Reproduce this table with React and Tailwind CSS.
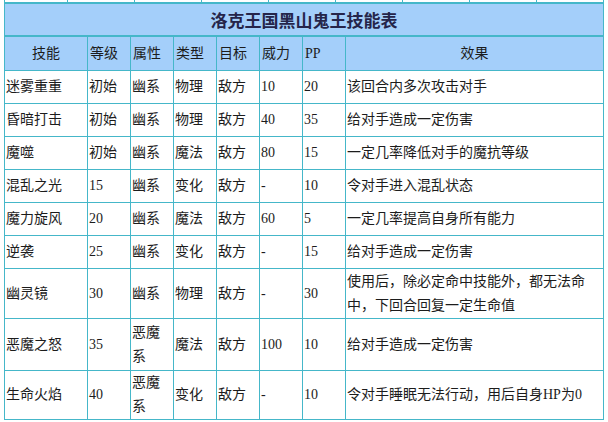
import React from "react";

const rows = [
  ["迷雾重重", "初始", "幽系", "物理", "敌方", "10", "20", "该回合内多次攻击对手"],
  ["昏暗打击", "初始", "幽系", "物理", "敌方", "40", "35", "给对手造成一定伤害"],
  ["魔噬", "初始", "幽系", "魔法", "敌方", "80", "15", "一定几率降低对手的魔抗等级"],
  ["混乱之光", "15", "幽系", "变化", "敌方", "-", "10", "令对手进入混乱状态"],
  ["魔力旋风", "20", "幽系", "魔法", "敌方", "60", "5", "一定几率提高自身所有能力"],
  ["逆袭", "25", "幽系", "变化", "敌方", "-", "15", "给对手造成一定伤害"],
  ["幽灵镜", "30", "幽系", "物理", "敌方", "-", "30", ["使用后，除必定命中技能外，都无法命", "中，下回合回复一定生命值"]],
  ["恶魔之怒", "35", ["恶魔", "系"], "魔法", "敌方", "100", "10", "给对手造成一定伤害"],
  ["生命火焰", "40", ["恶魔", "系"], "变化", "敌方", "-", "10", "令对手睡眠无法行动，用后自身HP为0"],
];

const headers = ["技能", "等级", "属性", "类型", "目标", "威力", "PP", "效果"];

function Cell({ v }) {
  return (
    <div className="flex items-center bg-white pl-px leading-[24px]">
      <div>
        {Array.isArray(v)
          ? v.map((l, i) => (
              <div key={i} className="whitespace-nowrap">
                {l}
              </div>
            ))
          : <span className="whitespace-nowrap">{v}</span>}
      </div>
    </div>
  );
}

export default function App() {
  return (
    <div
      className="h-[422px] w-[608px] overflow-hidden bg-white text-[14px] text-[#1c1c1c]"
      style={{ fontFamily: '"Liberation Serif", "Noto Sans CJK SC", serif' }}
    >
      <div className="ml-[4px] w-[600px]">
        <div className="grid h-[2px] grid-cols-[62px_repeat(8,66px)] gap-x-px bg-[#45b7c9] px-px">
          {Array.from({ length: 9 }).map((_, i) => (
            <div key={i} className="bg-white" />
          ))}
        </div>
        <div className="bg-[#45b7c9] px-px pb-px pt-[2px]">
          <div
            className="flex h-[31px] items-center justify-center bg-[#a4cffa] text-[17px] font-bold text-[#25254a]"
            style={{ fontFamily: '"Noto Sans CJK SC", sans-serif' }}
          >
            洛克王国黑山鬼王技能表
          </div>
          <div className="mt-[2px] grid grid-cols-[82px_repeat(6,42px)_257px] grid-rows-[33px_repeat(6,32px)_49px_51px_48px] gap-px">
            {headers.map((h, i) => (
              <div
                key={h}
                className={
                  "flex items-center bg-[#a4cffa] " +
                  (i === 0 || i === 7 ? "justify-center" : "pl-[2px]")
                }
              >
                {h}
              </div>
            ))}
            {rows.map((r, ri) =>
              r.map((v, ci) => <Cell key={ri + "-" + ci} v={v} />)
            )}
          </div>
        </div>
      </div>
    </div>
  );
}
